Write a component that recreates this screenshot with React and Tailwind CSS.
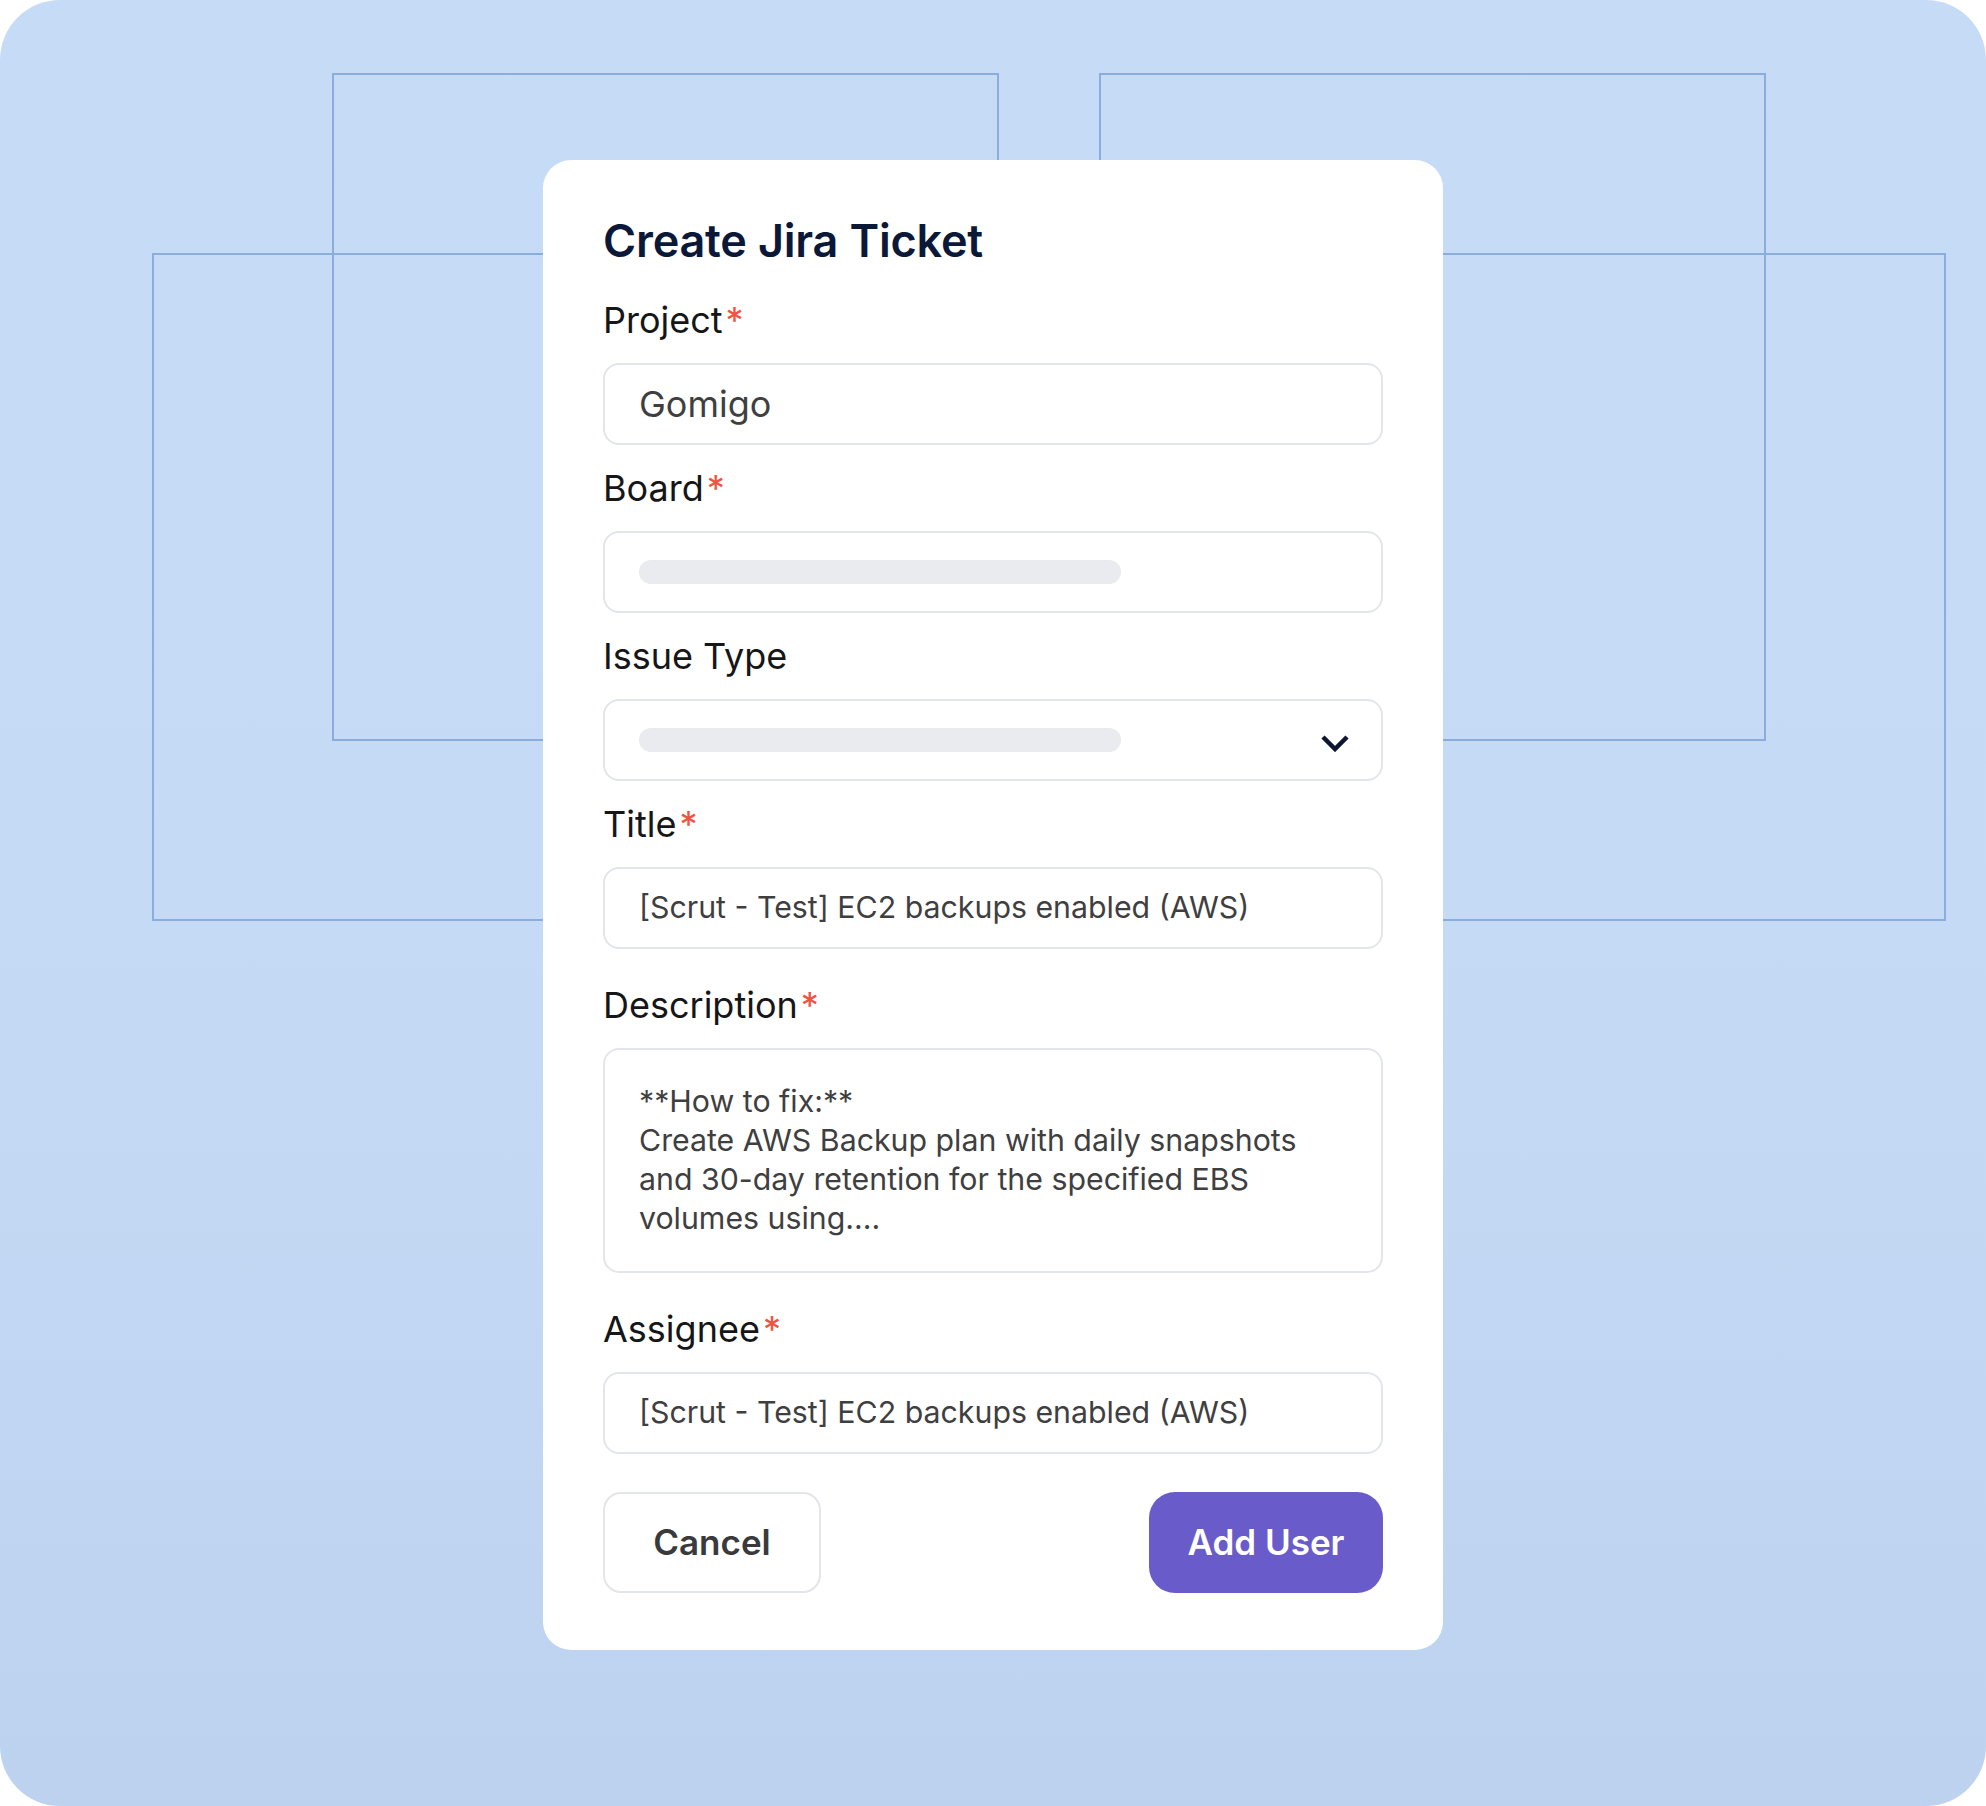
import React from 'react';

const font = "font-['Inter',sans-serif]";

function Label({ text, required }) {
  return (
    <div className="h-[44px] text-[36px] leading-[44px] text-[#161618]">
      {text}
      {required && <span className="ml-[3px] text-[#f0533f]">*</span>}
    </div>
  );
}

function Skeleton() {
  return <div className="h-[24px] w-[482px] rounded-full bg-[#e9ebee]" />;
}

function Field({ label, required, className = '', children }) {
  return (
    <div className={className}>
      <Label text={label} required={required} />
      <div className="mt-[21px]">{children}</div>
    </div>
  );
}

function Box({ children, className = '' }) {
  return (
    <div className={`flex h-[82px] items-center rounded-[16px] border-2 border-[#e2e6eb] bg-white pl-[34px] pr-[32px] ${className}`}>
      {children}
    </div>
  );
}

export default function App() {
  const rects = [
    'left-[332px] top-[73px]',
    'left-[1099px] top-[73px]',
    'left-[152px] top-[253px]',
    'left-[1279px] top-[253px]',
  ];

  return (
    <div className={`${font} bg-white`}>
      <div className="relative h-[1806px] w-[1986px] overflow-hidden rounded-[60px] bg-linear-to-b from-[#c6dcf6] via-[#c5dbf5] to-[#bdd2ef] pt-[160px]">
        {/* decorative squares */}
        {rects.map((r) => (
          <div key={r} className={`absolute h-[668px] w-[667px] border-2 border-[#8badde] ${r}`} />
        ))}

        {/* Modal card */}
        <div className="relative z-10 mx-auto w-[900px] rounded-[28px] bg-white px-[60px] pb-[57px] pt-[53px]">
          <h1 className="h-[56px] text-[45px] font-semibold leading-[56px] tracking-[-0.2px] text-[#0b1838]">
            Create Jira Ticket
          </h1>

          <Field label="Project" required className="mt-[29px]">
            <Box>
              <span className="text-[36px] text-[#3f3f42]">Gomigo</span>
            </Box>
          </Field>

          <Field label="Board" required className="mt-[21px]">
            <Box>
              <Skeleton />
            </Box>
          </Field>

          <Field label="Issue Type" className="mt-[21px]">
            <Box className="justify-between">
              <Skeleton />
              <svg className="mt-[6px]" width="28" height="18" viewBox="0 0 28 18" fill="none">
                <polyline points="2,3 14,15 26,3" stroke="#0c1633" strokeWidth="4.5" />
              </svg>
            </Box>
          </Field>

          <Field label="Title" required className="mt-[21px]">
            <Box>
              <span className="text-[30.3px] text-[#3f3f42]">[Scrut - Test] EC2 backups enabled (AWS)</span>
            </Box>
          </Field>

          <Field label="Description" required className="mt-[34px]">
            <div className="h-[225px] rounded-[16px] border-2 border-[#e2e6eb] bg-white px-[34px] pt-[32px] text-[30.3px] leading-[39px] text-[#3f3f42]">
              <div>**How to fix:**</div>
              <div className="whitespace-nowrap">Create AWS Backup plan with daily snapshots</div>
              <div className="whitespace-nowrap">and 30-day retention for the specified EBS</div>
              <div className="whitespace-nowrap">volumes using....</div>
            </div>
          </Field>

          <Field label="Assignee" required className="mt-[34px]">
            <Box>
              <span className="text-[30.3px] text-[#3f3f42]">[Scrut - Test] EC2 backups enabled (AWS)</span>
            </Box>
          </Field>

          <div className="mt-[38px] flex items-center justify-between">
            <button className="flex h-[101px] w-[218px] items-center justify-center rounded-[18px] border-2 border-[#e2e6eb] bg-white text-[35px] font-semibold text-[#3a3a3d]">
              Cancel
            </button>
            <button className="flex h-[101px] w-[234px] items-center justify-center rounded-[26px] bg-[#6a5bcb] text-[35px] font-semibold text-white">
              Add User
            </button>
          </div>
        </div>
      </div>
    </div>
  );
}
